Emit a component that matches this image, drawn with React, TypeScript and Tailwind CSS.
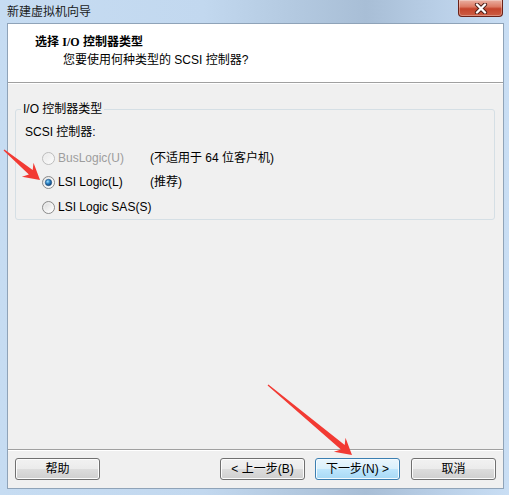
import React from "react";

type Pt = [number, number];

function arrowPoints(tail: Pt, tip: Pt, headLen: number, headHalf: number, neckLen: number, neckHalf: number, tailHalf: number): string {
  const dx = tip[0] - tail[0];
  const dy = tip[1] - tail[1];
  const len = Math.hypot(dx, dy);
  const ux = dx / len;
  const uy = dy / len;
  const nx = -uy;
  const ny = ux;
  const at = (d: number, w: number): Pt => [tip[0] - ux * d + nx * w, tip[1] - uy * d + ny * w];
  const pts: Pt[] = [
    at(len, tailHalf),
    at(neckLen, neckHalf),
    at(headLen, headHalf),
    tip,
    at(headLen, -headHalf),
    at(neckLen, -neckHalf),
    at(len, -tailHalf),
  ];
  return pts.map((p) => `${p[0].toFixed(1)},${p[1].toFixed(1)}`).join(" ");
}

function Radio({ checked = false, disabled = false, id }: { checked?: boolean; disabled?: boolean; id: string }) {
  return (
    <svg width="13" height="13" viewBox="0 0 13 13" className="shrink-0">
      <defs>
        <linearGradient id={`f${id}`} x1="0" y1="0" x2="1" y2="1">
          <stop offset="0" stopColor={disabled ? "#e6e6e6" : "#d4d4d4"} />
          <stop offset="0.6" stopColor={disabled ? "#f4f4f4" : "#f2f2f2"} />
          <stop offset="1" stopColor="#ffffff" />
        </linearGradient>
        <radialGradient id={`d${id}`} cx="0.38" cy="0.35" r="0.7">
          <stop offset="0" stopColor="#9fe0ff" />
          <stop offset="0.45" stopColor="#2f86c8" />
          <stop offset="1" stopColor="#0c3a6c" />
        </radialGradient>
      </defs>
      <circle cx="6.5" cy="6.5" r="6" fill={`url(#f${id})`} stroke={disabled ? "#bcbcbc" : "#8a8a8a"} strokeWidth="1" />
      <circle cx="6.5" cy="6.5" r="4.6" fill="none" stroke={disabled ? "#f7f7f7" : "#ffffff"} strokeOpacity="0.6" strokeWidth="0.8" />
      {checked && <circle cx="6.5" cy="6.5" r="3.2" fill={`url(#d${id})`} stroke="#1d4f82" strokeWidth="0.6" />}
    </svg>
  );
}

const btn =
  "flex h-[22px] w-[85px] items-center justify-center rounded-[3px] border border-[#707070] bg-[linear-gradient(180deg,#f2f2f2_0%,#ebebeb_50%,#dddddd_50%,#cfcfcf_100%)] shadow-[inset_0_0_0_1px_#fcfcfc] leading-[16px] text-black";
const btnDefault =
  "flex h-[22px] w-[85px] items-center justify-center rounded-[3px] border border-[#3c7fb1] bg-[linear-gradient(180deg,#eaf6fd_0%,#d9f0fc_50%,#bee6fd_50%,#a7d9f5_100%)] shadow-[inset_0_0_0_1px_#f4fbff] leading-[16px] text-black";

export default function App() {
  return (
    <div className="relative h-[495px] w-[509px] overflow-hidden bg-[linear-gradient(90deg,#c6dcf2_0%,#c2d8ef_40%,#b3c9e0_58%,#a8bed6_72%,#b9cfe7_86%,#c9def4_100%)] font-['Liberation_Sans','Noto_Sans_CJK_SC',sans-serif] text-[12px] text-black">
      <div className="flex h-[23px] items-start justify-between">
        <div className="pl-[7px] pt-[4px] leading-[16px] text-[#1a1a1a]">新建虚拟机向导</div>
        <div className="mr-[6px] flex h-[17px] w-[45px] items-center justify-center rounded-b-[4px] border border-t-0 border-[#6b2218] bg-[linear-gradient(180deg,#eab0a2_0%,#dc7a64_42%,#c4442c_55%,#cc5e44_100%)] shadow-[inset_0_0_0_1px_rgba(255,255,255,0.3)]">
          <svg width="14" height="11" viewBox="0 0 14 11">
            <path d="M3 1.5 L11 9.5 M11 1.5 L3 9.5" stroke="#4a1d16" strokeWidth="4.2" strokeLinecap="round" />
            <path d="M3 1.5 L11 9.5 M11 1.5 L3 9.5" stroke="#ffffff" strokeWidth="2.4" strokeLinecap="round" />
          </svg>
        </div>
      </div>
      <div className="ml-[7px] flex h-[466px] w-[497px] flex-col border border-[#8fa3b8]">
        <div className="h-[58px] bg-white pl-[27px] pt-[10px]">
          <div className="font-bold leading-[16px]">
            选择 <span className="font-['Liberation_Serif']">I/O</span> 控制器类型
          </div>
          <div className="mt-[2px] pl-[28px] leading-[16px]">您要使用何种类型的 SCSI 控制器?</div>
        </div>
        <div className="h-px bg-[#a0a0a0]" />
        <div className="h-px bg-white" />
        <div className="flex flex-1 flex-col bg-[#f0f0f0]">
          <fieldset className="ml-[7px] mt-[17px] w-[480px] rounded-[3px] border border-[#d5dfe5] px-[5px] pb-[4px]">
            <legend className="px-[2px] leading-[16px]">I/O 控制器类型</legend>
            <div className="mt-[7px] pl-[4px] leading-[16px]">SCSI 控制器:</div>
            <div className="mt-[10px] flex h-[16px] items-center pl-[21px]">
              <div className="flex w-[108px] items-center gap-[3px]">
                <Radio id="r1" disabled />
                <span className="leading-[16px] text-[#9d9d9d]">BusLogic(U)</span>
              </div>
              <span className="leading-[16px]">(不适用于 64 位客户机)</span>
            </div>
            <div className="mt-[8px] flex h-[16px] items-center pl-[21px]">
              <div className="flex w-[108px] items-center gap-[3px]">
                <Radio id="r2" checked />
                <span className="leading-[16px]">LSI Logic(L)</span>
              </div>
              <span className="leading-[16px]">(推荐)</span>
            </div>
            <div className="mt-[9px] flex h-[16px] items-center pl-[21px]">
              <div className="flex items-center gap-[3px]">
                <Radio id="r3" />
                <span className="leading-[16px]">LSI Logic SAS(S)</span>
              </div>
            </div>
          </fieldset>
          <div className="flex-1" />
          <div className="h-px bg-[#a0a0a0]" />
          <div className="h-px bg-white" />
          <div className="flex px-[7px] pb-[8px] pt-[7px]">
            <div className={btn}>帮助</div>
            <div className={`ml-auto ${btn}`}>&lt; 上一步(B)</div>
            <div className={`ml-[10px] ${btnDefault}`}>下一步(N) &gt;</div>
            <div className={`ml-[11px] ${btn}`}>取消</div>
          </div>
        </div>
      </div>
      <svg className="pointer-events-none absolute inset-0 h-[495px] w-[509px]" viewBox="0 0 509 495">
        <polygon points={arrowPoints([4, 150], [40, 180], 16, 9, 12, 3, 0.7)} fill="#f23a33" />
        <polygon points={arrowPoints([268, 385], [352, 455], 16, 9, 12, 3, 0.7)} fill="#f23a33" />
      </svg>
    </div>
  );
}
